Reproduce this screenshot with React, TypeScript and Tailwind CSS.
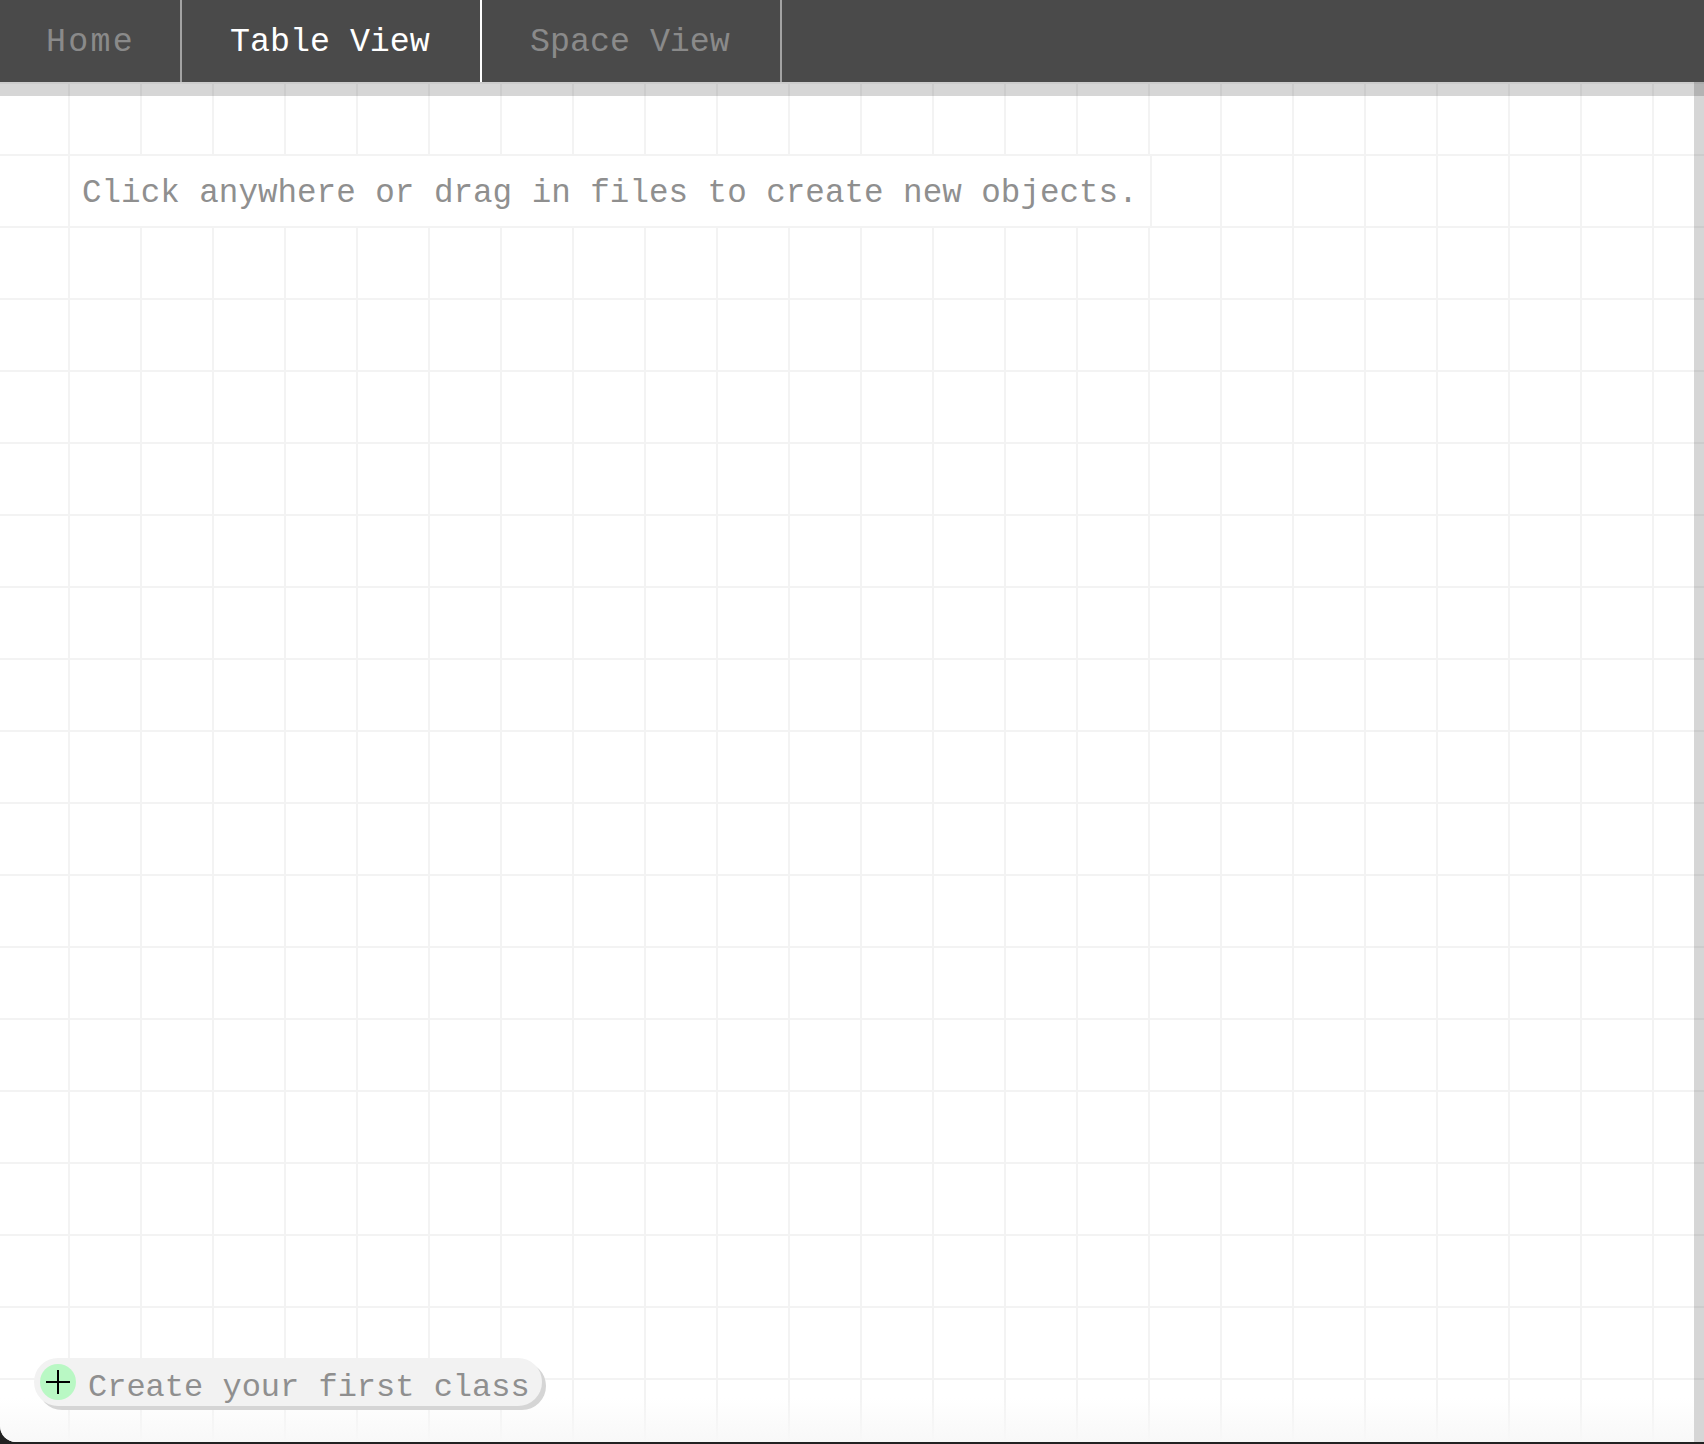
const mono = "font-['Liberation_Mono','DejaVu_Sans_Mono',monospace]";

const tabs = [
  { label: "Home", width: "w-[182px]", pad: "pl-[46px] tracking-[2.3px]", active: false },
  { label: "Table View", width: "w-[300px]", pad: "pl-[48px]", active: true },
  { label: "Space View", width: "w-[300px]", pad: "pl-[48px]", active: false },
];

export default function App() {
  return (
    <div className={`flex h-[1444px] w-[1704px] flex-col overflow-hidden bg-[#222] ${mono}`}>
      <nav className="flex h-[82px] shrink-0 bg-[#4a4a4a]">
        {tabs.map((tab) => (
          <div
            key={tab.label}
            className={`flex items-center border-r-2 pt-[4px] text-[33.3px] ${tab.width} ${tab.pad} ${
              tab.active ? "border-white text-white" : "border-[#a3a3a3] text-[#8a8a8a]"
            }`}
          >
            {tab.label}
          </div>
        ))}
      </nav>

      <main className="relative flex h-[1360px] shrink-0 flex-col rounded-bl-[16px] bg-white bg-[linear-gradient(to_right,#f3f3f3_2px,transparent_2px),linear-gradient(to_bottom,#f3f3f3_2px,transparent_2px)] bg-[length:72px_72px] bg-[position:68px_0px] shadow-[inset_0_14px_0_rgba(0,0,0,0.16),inset_-10px_0_0_rgba(0,0,0,0.16)]">
        <div className="mt-[74px] ml-[70px] flex h-[70px] w-[1082px] items-center border-r-2 border-[#f3f3f3] bg-white pt-[7px] pl-[12px] text-[32.6px] text-[#8f8f8f]">
          Click anywhere or drag in files to create new objects.
        </div>

        <div className="pointer-events-none absolute right-[10px] bottom-0 left-0 h-[44px] rounded-bl-[16px] bg-gradient-to-b from-white/0 to-[#f8f8f8]" />

        <button className="relative mt-auto mb-[36px] ml-[34px] flex h-[48px] w-[508px] items-center rounded-full bg-[#f2f2f2] pl-[6px] text-[32px] text-[#8f8f8f] shadow-[4px_4px_0_#d5d5d5]">
          <span className="flex h-[36px] w-[36px] items-center justify-center rounded-full bg-[#b9f8c4]">
            <svg width="26" height="26" viewBox="0 0 26 26" fill="none" stroke="#000" strokeWidth="2">
              <path d="M1 13h24M13 1v24" />
            </svg>
          </span>
          <span className="ml-[12px] pt-[11px]">Create your first class</span>
        </button>
      </main>
    </div>
  );
}
